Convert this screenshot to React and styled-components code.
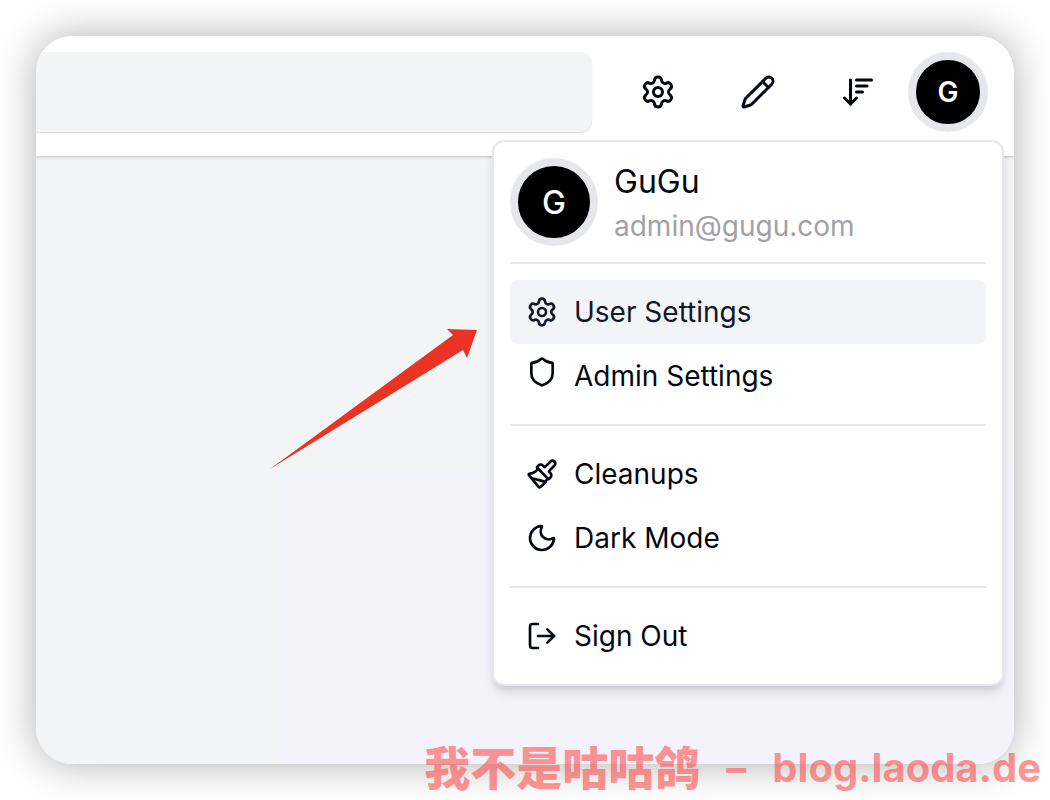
import React from "react"
import styled, { createGlobalStyle } from "styled-components"
import {
  ArrowDownWideNarrow,
  LogOut,
  Moon,
  Paintbrush,
  Pencil,
  Settings,
  Shield,
} from "lucide-react"

const MENU_GROUPS = [
  [
    { label: "User Settings", icon: Settings, active: true },
    { label: "Admin Settings", icon: Shield, iconTop: true },
  ],
  [
    { label: "Cleanups", icon: Paintbrush },
    { label: "Dark Mode", icon: Moon },
  ],
  [{ label: "Sign Out", icon: LogOut }],
]

const App = () => (
  <Page>
    <GlobalStyle />
    <Window>
      <Header>
        <Search type="search" aria-label="Search" />
        <IconButton type="button" aria-label="Settings">
          <Settings size={36} />
        </IconButton>
        <IconButton type="button" aria-label="Edit">
          <Pencil size={36} />
        </IconButton>
        <IconButton type="button" aria-label="Sort">
          <ArrowDownWideNarrow size={36} />
        </IconButton>
        <AvatarButton type="button" aria-label="Account">
          G
        </AvatarButton>
        <Menu aria-label="Account">
          <Profile>
            <Avatar>G</Avatar>
            <div>
              <Name>GuGu</Name>
              <Email>admin@gugu.com</Email>
            </div>
          </Profile>
          {MENU_GROUPS.map((group) => (
            <MenuGroup key={group[0].label}>
              {group.map(({ label, icon: Icon, active, iconTop }) => (
                <MenuItem
                  key={label}
                  type="button"
                  $active={active}
                  $iconTop={iconTop}
                >
                  <Icon size={32} />
                  {label}
                </MenuItem>
              ))}
            </MenuGroup>
          ))}
        </Menu>
      </Header>
      <Content>
        <Pointer viewBox="0 0 208 140" aria-hidden="true">
          <path d="M0 140 L183 6 L177 0 L207 1 L197 29 L193 21 Z" />
        </Pointer>
      </Content>
    </Window>
    <Watermark>
      <span>我不是咕咕鸽</span>
      <Site>–</Site>
      <Site>blog.laoda.de</Site>
    </Watermark>
  </Page>
)

export default App

const GlobalStyle = createGlobalStyle`
  * {
    box-sizing: border-box;
  }

  body {
    margin: 0;
    background: #ffffff;
    color: #030712;
    font-family: Inter, "Noto Sans CJK SC", sans-serif;
  }

  button {
    border: 0;
    padding: 0;
    color: inherit;
    font-family: inherit;
    cursor: pointer;
  }
`

const Page = styled.div`
  position: relative;
  display: flex;
  min-height: 100vh;
  padding: 36px;
`

const Window = styled.main`
  display: flex;
  flex: 1;
  flex-direction: column;
  min-width: 0;
  overflow: hidden;
  border-radius: 36px;
  box-shadow: 0 0 40px rgba(0, 0, 0, 0.32);
`

const Header = styled.header`
  position: relative;
  z-index: 1;
  display: flex;
  align-items: center;
  height: 120px;
  padding: 0 26px 8px 0;
  background: #ffffff;
  box-shadow: 0 1px 3px rgba(0, 0, 0, 0.22);
`

const Search = styled.input`
  flex: 1;
  min-width: 0;
  height: 80px;
  margin-right: 16px;
  padding: 0 24px;
  border: 0;
  border-radius: 0 12px 12px 0;
  background: #f3f4f6;
  box-shadow: 0 1px 1px rgba(0, 0, 0, 0.14);
  font: 400 28px Inter, sans-serif;
`

const IconButton = styled.button`
  display: flex;
  align-items: center;
  justify-content: center;
  width: 100px;
  height: 80px;
  background: none;
`

const AvatarButton = styled.button`
  width: 80px;
  height: 80px;
  && {
    border: 8px solid #e5e7eb;
    color: #ffffff;
  }
  border-radius: 50%;
  background: #000000;
  font-size: 28px;
  font-weight: 600;
`

const Menu = styled.nav`
  position: absolute;
  top: 104px;
  right: 10px;
  width: 512px;
  padding: 16px;
  border: 2px solid #e5e7eb;
  border-radius: 12px;
  background: #ffffff;
  box-shadow: 0 8px 12px -2px rgba(0, 0, 0, 0.12),
    0 4px 8px -4px rgba(0, 0, 0, 0.12);
`

const Profile = styled.div`
  display: flex;
  gap: 16px;
  padding-bottom: 16px;
`

const Avatar = styled.div`
  display: flex;
  align-items: center;
  justify-content: center;
  width: 88px;
  height: 88px;
  border: 8px solid #e5e7eb;
  border-radius: 50%;
  background: #000000;
  color: #ffffff;
  font-size: 32px;
  font-weight: 500;
`

const Name = styled.div`
  font-size: 32px;
  line-height: 48px;
`

const Email = styled.div`
  color: #a1a2a5;
  font-size: 28px;
  line-height: 40px;
`

const MenuGroup = styled.div`
  padding: 16px 0;
  border-top: 2px solid #e5e7eb;

  &:last-child {
    padding-bottom: 0;
  }
`

const MenuItem = styled.button`
  display: flex;
  align-items: ${(props) => (props.$iconTop ? "flex-start" : "center")};
  gap: 16px;
  width: 100%;
  && {
    padding: 12px 16px;
  }
  border-radius: 8px;
  background: ${(props) => (props.$active ? "#f3f4f8" : "none")};
  color: ${(props) => (props.$active ? "#111827" : "inherit")};
  font-size: 28px;
  line-height: 40px;
  text-align: left;
`

const Content = styled.section`
  position: relative;
  flex: 1;
  background: linear-gradient(#f4f3fc, #f4f3fc) right bottom / 75% 47% no-repeat
    #f3f4f6;
`

const Pointer = styled.svg`
  position: absolute;
  top: 173px;
  right: 536px;
  width: 208px;
  height: 140px;
  fill: #ea3323;
`

const Watermark = styled.div`
  position: absolute;
  right: 9px;
  bottom: 4px;
  display: flex;
  align-items: center;
  gap: 26px;
  color: rgba(255, 70, 70, 0.58);
  font-size: 46px;
  font-weight: 900;
  line-height: 56px;
  white-space: nowrap;
`

const Site = styled.span`
  font-size: 40px;
  font-weight: 700;
`
